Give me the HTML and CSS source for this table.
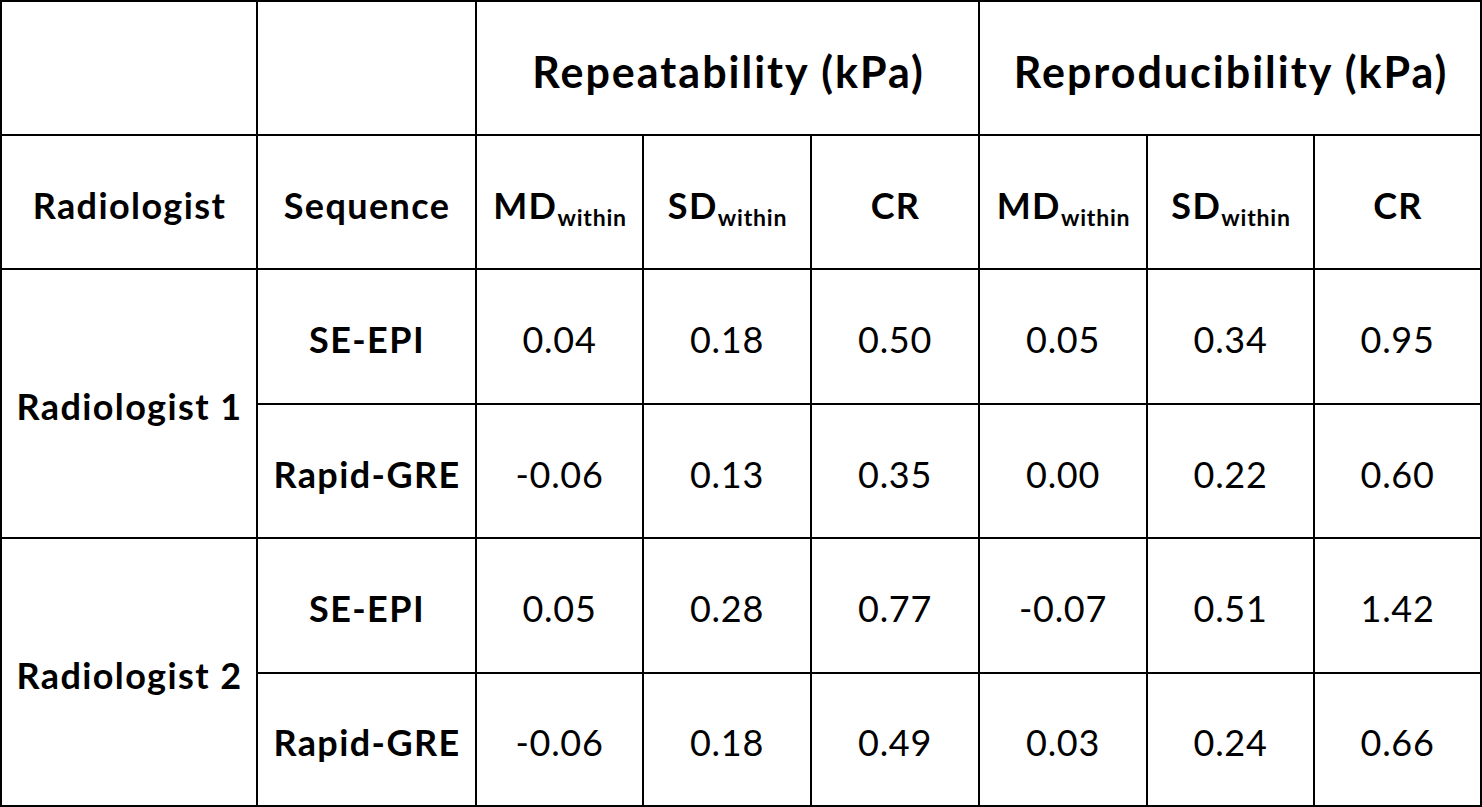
FILE: index.html
```html
<!DOCTYPE html>
<html lang="en">
<head>
<meta charset="utf-8">
<title>Repeatability and Reproducibility</title>
<link rel="stylesheet" href="styles.css">
</head>
<body>
<table class="data">
  <colgroup>
    <col class="c-rad">
    <col class="c-seq">
    <col class="c-a">
    <col class="c-b">
    <col class="c-b">
    <col class="c-b">
    <col class="c-a">
    <col class="c-a">
  </colgroup>
  <tbody>
    <tr class="r1">
      <td></td>
      <td></td>
      <th colspan="3" class="group">Repeatability (kPa)</th>
      <th colspan="3" class="group">Reproducibility (kPa)</th>
    </tr>
    <tr class="r2">
      <th>Radiologist</th>
      <th>Sequence</th>
      <th>MD<sub>within</sub></th>
      <th>SD<sub>within</sub></th>
      <th>CR</th>
      <th>MD<sub>within</sub></th>
      <th>SD<sub>within</sub></th>
      <th>CR</th>
    </tr>
    <tr class="r3">
      <th rowspan="2">Radiologist 1</th>
      <th>SE-EPI</th>
      <td>0.04</td><td>0.18</td><td>0.50</td><td>0.05</td><td>0.34</td><td>0.95</td>
    </tr>
    <tr class="r4">
      <th>Rapid-GRE</th>
      <td>-0.06</td><td>0.13</td><td>0.35</td><td>0.00</td><td>0.22</td><td>0.60</td>
    </tr>
    <tr class="r5">
      <th rowspan="2">Radiologist 2</th>
      <th>SE-EPI</th>
      <td>0.05</td><td>0.28</td><td>0.77</td><td>-0.07</td><td>0.51</td><td>1.42</td>
    </tr>
    <tr class="r6">
      <th>Rapid-GRE</th>
      <td>-0.06</td><td>0.18</td><td>0.49</td><td>0.03</td><td>0.24</td><td>0.66</td>
    </tr>
  </tbody>
</table>
</body>
</html>
```
FILE: styles.css
```css
html, body {
  margin: 0;
  padding: 0;
  background: #fff;
}

.data {
  width: 1482px;
  table-layout: fixed;
  border-collapse: separate;
  border-spacing: 0;
  border-left: 2px solid #000;
  border-top: 2px solid #000;
  font-family: "Lato", "Open Sans", sans-serif;
  color: #000;
  box-sizing: border-box;
}

.c-rad { width: 256px; }
.c-seq { width: 219px; }
.c-a { width: 167px; }
.c-b { width: 168px; }

.data td,
.data th {
  box-sizing: border-box;
  border-right: 2px solid #000;
  border-bottom: 2px solid #000;
  padding: 7px 0 0 0;
  text-align: center;
  vertical-align: middle;
  font-size: 36px;
  line-height: 1.2;
  white-space: nowrap;
}

.data th {
  font-weight: 700;
  letter-spacing: 1.4px;
  padding-left: 1px;
}

.data td {
  font-weight: 400;
  letter-spacing: 0.7px;
}

.data th.group {
  font-size: 43px;
  letter-spacing: 2px;
  padding-top: 8px;
  padding-left: 2px;
}

.r1 { height: 134px; }
.r2 { height: 134px; }
.r3 { height: 135px; }
.r4 { height: 134px; }
.r5 { height: 135px; }
.r6 { height: 133px; }

.data sub {
  font-size: 23px;
  letter-spacing: 0.8px;
  line-height: 0;
  vertical-align: -7px;
}
```
